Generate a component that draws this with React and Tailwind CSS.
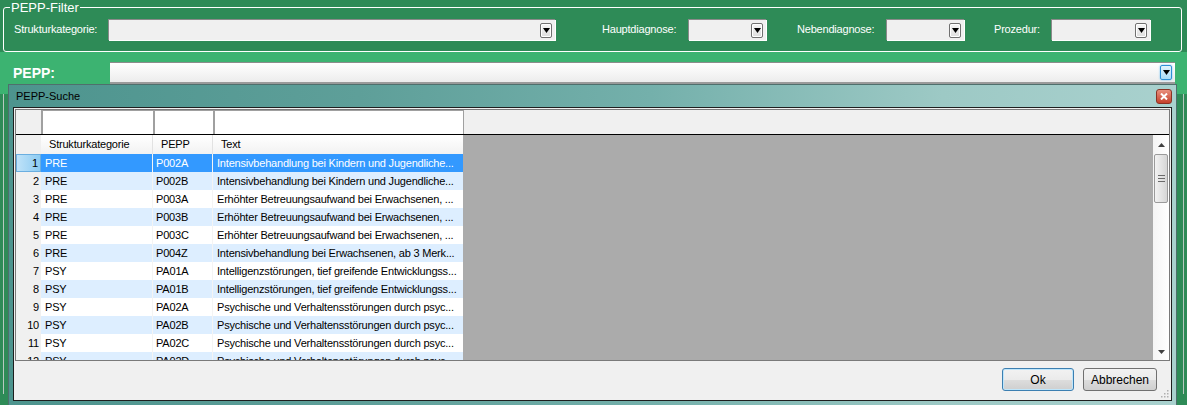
import React from 'react';

const rows = [
  ['PRE', 'P002A', 'Intensivbehandlung bei Kindern und Jugendliche...'],
  ['PRE', 'P002B', 'Intensivbehandlung bei Kindern und Jugendliche...'],
  ['PRE', 'P003A', 'Erhöhter Betreuungsaufwand bei Erwachsenen, ...'],
  ['PRE', 'P003B', 'Erhöhter Betreuungsaufwand bei Erwachsenen, ...'],
  ['PRE', 'P003C', 'Erhöhter Betreuungsaufwand bei Erwachsenen, ...'],
  ['PRE', 'P004Z', 'Intensivbehandlung bei Erwachsenen, ab 3 Merk...'],
  ['PSY', 'PA01A', 'Intelligenzstörungen, tief greifende Entwicklungss...'],
  ['PSY', 'PA01B', 'Intelligenzstörungen, tief greifende Entwicklungss...'],
  ['PSY', 'PA02A', 'Psychische und Verhaltensstörungen durch psyc...'],
  ['PSY', 'PA02B', 'Psychische und Verhaltensstörungen durch psyc...'],
  ['PSY', 'PA02C', 'Psychische und Verhaltensstörungen durch psyc...'],
  ['PSY', 'PA02D', 'Psychische und Verhaltensstörungen durch psyc...'],
];

function Arrow() {
  return (
    <svg width="7" height="5" viewBox="0 0 7 5">
      <path d="M0 0h7L3.5 5z" fill="#000" />
    </svg>
  );
}

function DropButton({ blue }) {
  return (
    <span
      className={`flex h-[15px] w-[12px] items-center justify-center rounded-[2px] border ${
        blue
          ? 'h-[13px] w-[11px] border-[#2d8fd6] bg-[linear-gradient(#e4f4fd,#a9dbf6)] shadow-[0_0_2px_#5cb8f0]'
          : 'border-[#707070] bg-[linear-gradient(#f6f6f6,#dedede)] shadow-[inset_0_0_0_1px_#fff]'
      }`}
    >
      <Arrow />
    </span>
  );
}

function Combo({ width }) {
  return (
    <div
      className={`flex h-[21px] items-center justify-end border-t border-l border-[#8a8a8a] bg-[#f0f0f0] pr-[3px] shadow-[1px_1px_0_#ffffff] ${width}`}
    >
      <DropButton />
    </div>
  );
}

export default function App() {
  return (
    <div className="relative h-[405px] w-[1187px] overflow-hidden bg-[#2e8b57] font-['Liberation_Sans',Arial,sans-serif] text-[11px] tracking-[-0.2px] text-black">
      {/* filter group */}
      <div className="pl-[3px] pt-[0px]">
        <fieldset className="h-[52px] w-[1179px] rounded-[3px] border border-white px-[10px] pt-[4px]">
          <legend className="ml-[-4px] px-[1px] text-[13px] leading-[15px] tracking-normal text-white">PEPP-Filter</legend>
          <div className="flex items-center text-white">
            <span className="w-[94px]">Strukturkategorie:</span>
            <Combo width="w-[447px]" />
            <span className="ml-[47px] w-[86px]">Hauptdiagnose:</span>
            <Combo width="w-[78px]" />
            <span className="ml-[31px] w-[89px]">Nebendiagnose:</span>
            <Combo width="w-[78px]" />
            <span className="ml-[30px] w-[57px]">Prozedur:</span>
            <Combo width="w-[99px]" />
          </div>
        </fieldset>
      </div>

      {/* PEPP band */}
      <div className="flex h-[42px] items-start bg-[#3cb371] pt-[10px]">
        <span className="w-[110px] pl-[13px] pt-[1px] text-[14px] font-bold tracking-normal text-white">PEPP:</span>
        <div className="flex h-[20px] w-[1065px] items-center justify-end border-t border-[#8c8c8c] bg-[linear-gradient(#ffffff,#ececec)] pr-[3px] shadow-[0_2px_0_#9a9a9a]">
          <DropButton blue />
        </div>
      </div>
      <div className="mx-[3px] h-[300px] border-x border-[#b8c8c0]" />

      {/* dialog */}
      <div className="absolute left-[8px] top-[84px] flex h-[330px] w-[1169px] flex-col border border-[#4f6f6c] bg-[linear-gradient(90deg,#4d948e_0%,#5e9f99_30%,#74b0ab_55%,#9dc9c5_80%,#a9d1ce_100%)] px-[4px]">
        <div className="flex h-[22px] items-center justify-between">
          <span className="pl-[3px] tracking-normal">PEPP-Suche</span>
          <span className="mr-[0px] flex h-[15px] w-[16px] items-center justify-center rounded-[3px] border border-[#8a3325] bg-[linear-gradient(#e9907e,#c4412b)]">
            <svg width="8" height="7" viewBox="0 0 8 7">
              <path d="M1 0.5L7 6.5M7 0.5L1 6.5" stroke="#fff" strokeWidth="2" />
            </svg>
          </span>
        </div>

        <div className="flex h-[294px] flex-col border border-[#1e1e1e] bg-[#f0f0f0] p-[1px]">
          {/* grid */}
          <div className="flex h-[252px] flex-col overflow-hidden border border-[#7a7a7a] bg-[#ababab]">
            {/* filter row */}
            <div className="flex h-[25px] border-b border-black bg-[#f0f0f0]">
              <div className="w-[25px]" />
              <div className="w-[112px] border-l-2 border-t border-[#a0a0a0] bg-white" />
              <div className="w-[60px] border-l-2 border-t border-[#a0a0a0] bg-white" />
              <div className="w-[250px] border-l-2 border-t border-[#a0a0a0] bg-white" />
              <div className="flex-1 border-l border-[#a0a0a0]" />
            </div>

            <div className="flex min-h-0 flex-1">
              <div className="w-[447px] overflow-hidden">
                {/* header */}
                <div className="flex h-[19px] items-center bg-[#f0f0f0]">
                  <div className="h-full w-[25px]" />
                  <div className="flex h-full w-[112px] items-center border-r border-[#e2e2e2] bg-[linear-gradient(#ffffff,#f2f2f2)] pl-[8px]">Strukturkategorie</div>
                  <div className="flex h-full w-[60px] items-center border-r border-[#e2e2e2] bg-[linear-gradient(#ffffff,#f2f2f2)] pl-[8px]">PEPP</div>
                  <div className="flex h-full w-[250px] items-center bg-[linear-gradient(#ffffff,#f2f2f2)] pl-[8px]">Text</div>
                </div>
                {rows.map((r, i) => {
                  const sel = i === 0;
                  const bg = sel ? 'bg-[#3399ff] text-white' : i % 2 === 1 ? 'bg-[#ddeeff]' : 'bg-white';
                  return (
                    <div key={i} className="flex h-[18px]">
                      <div
                        className={`flex w-[25px] items-center justify-end pr-[2px] ${
                          sel ? 'border border-[#6aaee0] bg-[linear-gradient(90deg,#bfe2f8,#8ccbf2)]' : 'bg-[#f0f0f0]'
                        }`}
                      >
                        {i + 1}
                      </div>
                      <div className={`flex w-[112px] items-center border-r border-[#f4f4f4] pl-[4px] ${bg}`}>{r[0]}</div>
                      <div className={`flex w-[60px] items-center border-r border-[#f4f4f4] pl-[3px] ${bg}`}>{r[1]}</div>
                      <div className={`flex w-[250px] items-center overflow-hidden whitespace-nowrap pl-[4px] ${bg}`}>{r[2]}</div>
                    </div>
                  );
                })}
              </div>
              <div className="flex-1" />
              {/* scrollbar */}
              <div className="flex w-[16px] flex-col bg-[linear-gradient(90deg,#f4f4f4,#ffffff)]">
                <div className="flex h-[19px] items-center justify-center">
                  <svg width="7" height="4" viewBox="0 0 7 4"><path d="M0 4h7L3.5 0z" fill="#404040" /></svg>
                </div>
                <div className="mx-[1px] flex h-[49px] items-center justify-center rounded-[2px] border border-[#9a9a9a] bg-[linear-gradient(90deg,#f2f2f2,#d6d6d6)]">
                  <svg width="7" height="7" viewBox="0 0 7 7">
                    <path d="M0 0.5h7M0 3.5h7M0 6.5h7" stroke="#6a6a6a" />
                  </svg>
                </div>
                <div className="flex-1" />
                <div className="flex h-[17px] items-center justify-center">
                  <svg width="7" height="4" viewBox="0 0 7 4"><path d="M0 0h7L3.5 4z" fill="#404040" /></svg>
                </div>
              </div>
            </div>
          </div>

          {/* buttons */}
          <div className="relative flex flex-1 justify-end gap-[9px] pr-[13px] pt-[7px] tracking-normal">
            <button className="h-[23px] w-[72px] rounded-[3px] border border-[#3c7fb1] bg-[linear-gradient(#f2f2f2_0%,#ebebeb_50%,#dddddd_51%,#cfcfcf_100%)] shadow-[inset_0_0_0_1px_#bfe6fb] text-[12px]">Ok</button>
            <button className="h-[23px] w-[74px] rounded-[3px] border border-[#707070] bg-[linear-gradient(#f2f2f2_0%,#ebebeb_50%,#dddddd_51%,#cfcfcf_100%)] text-[12px]">Abbrechen</button>
            <svg className="absolute bottom-[1px] right-[1px]" width="8" height="8" viewBox="0 0 8 8">
              <g fill="#b0b0b0">
                <rect x="6" y="0" width="1.5" height="1.5" />
                <rect x="3" y="3" width="1.5" height="1.5" />
                <rect x="6" y="3" width="1.5" height="1.5" />
                <rect x="0" y="6" width="1.5" height="1.5" />
                <rect x="3" y="6" width="1.5" height="1.5" />
                <rect x="6" y="6" width="1.5" height="1.5" />
              </g>
            </svg>
          </div>
        </div>
      </div>
    </div>
  );
}
